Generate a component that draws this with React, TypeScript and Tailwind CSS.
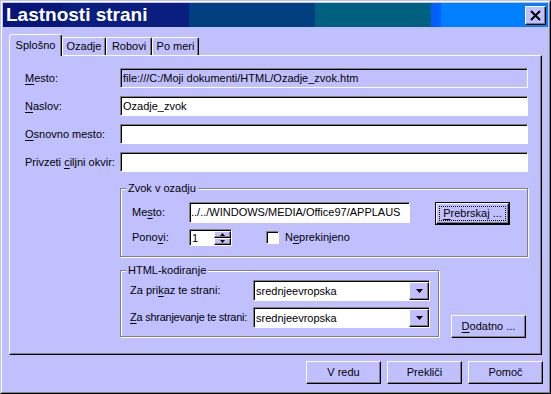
import React from "react";

const F = "font-['Liberation_Sans',Arial,sans-serif]";
const raised =
  "border border-t-white border-l-white border-r-black border-b-black shadow-[inset_-1px_-1px_0_#808080]";
const sunken =
  "border border-t-[#808080] border-l-[#808080] border-r-white border-b-white shadow-[inset_1px_1px_0_#000]";
const etched = "border border-[#808080] shadow-[1px_1px_0_#fff,inset_1px_1px_0_#fff]";

function U({ children }: { children: React.ReactNode }) {
  return <span className="underline underline-offset-[2px] decoration-1">{children}</span>;
}

function Btn({ children, className = "" }: { children: React.ReactNode; className?: string }) {
  return (
    <div className={`${raised} bg-[#c0c0ff] flex items-center justify-center h-[23px] w-[75px] ${className}`}>
      {children}
    </div>
  );
}

function Tab({ label, sel, w }: { label: React.ReactNode; sel?: boolean; w: string }) {
  if (sel)
    return (
      <div
        className={`relative z-10 mb-[-1px] h-[22px] ${w} bg-[#c0c0ff] border-l border-t border-r border-l-white border-t-white border-r-black rounded-tl-[3px] rounded-tr-[3px] shadow-[inset_-1px_0_0_#808080] flex items-center justify-center pb-[1px]`}
      >
        {label}
      </div>
    );
  return (
    <div
      className={`h-[18px] ${w} bg-[#c0c0ff] border-l border-t border-r border-l-white border-t-white border-r-black rounded-tl-[2px] rounded-tr-[2px] shadow-[inset_-1px_0_0_#808080] flex items-center justify-center`}
    >
      {label}
    </div>
  );
}

function Row({ label, value, ro }: { label: React.ReactNode; value?: string; ro?: boolean }) {
  return (
    <div className="flex items-center h-[20px]">
      <div className="w-[95px] whitespace-nowrap">{label}</div>
      <div
        className={`${sunken} flex-1 h-[20px] ${ro ? "bg-[#c0c0ff]" : "bg-white"} flex items-center pl-[2px] whitespace-nowrap overflow-hidden`}
      >
        {value}
      </div>
    </div>
  );
}

function Legend({ children }: { children: React.ReactNode }) {
  return (
    <span className="absolute top-[-7px] left-[5px] px-[2px] bg-[#c0c0ff] leading-[13px] whitespace-nowrap">
      {children}
    </span>
  );
}

function Select({ value }: { value: string }) {
  return (
    <div className={`${sunken} bg-white w-[177px] h-[21px] flex pt-[1px] pl-[1px]`}>
      <div className="flex-1 flex items-center pl-[1px] whitespace-nowrap overflow-hidden">{value}</div>
      <div className={`${raised} bg-[#c0c0ff] w-[20px] h-full flex items-center justify-center`}>
        <svg width="7" height="4" viewBox="0 0 7 4">
          <path d="M0 0H7L3.5 4Z" fill="#000" />
        </svg>
      </div>
    </div>
  );
}

export default function App() {
  return (
    <div
      className={`${F} text-[11px] leading-[13px] text-black w-[551px] h-[394px] bg-[#c0c0ff] border border-t-[#c0c0ff] border-l-[#c0c0ff] border-r-black border-b-black`}
    >
      <div className="w-full h-full border border-t-white border-l-white border-r-[#808080] border-b-[#808080] flex flex-col">
        {/* Title bar */}
        <div className="mt-[1px] mx-[1px] h-[24px] flex items-center bg-[linear-gradient(to_right,#08167a_59px,#0a1e80_59px,#0a1e80_186px,#004080_186px,#004080_312px,#00607f_312px,#00607f_428px,#0060ff_428px,#0060ff_438px,#0080ff_438px)]">
          <div className="flex-1 pl-[3px] font-bold text-[19px] leading-[24px] text-white">
            Lastnosti strani
          </div>
          <div className={`${raised} bg-[#c0c0ff] w-[21px] h-[19px] mr-[2px] mt-[1px] flex items-center justify-center`}>
            <svg width="11" height="11" viewBox="0 0 11 11">
              <path d="M1 1L10 10M10 1L1 10" stroke="#000" strokeWidth="2" />
            </svg>
          </div>
        </div>

        {/* Tabs */}
        <div className="mt-[7px] ml-[7px] h-[21px] flex items-end">
          <Tab sel w="w-[53px]" label="Splošno" />
          <Tab w="w-[44px]" label="Ozadje" />
          <Tab w="w-[46px]" label="Robovi" />
          <Tab w="w-[47px]" label="Po meri" />
        </div>

        {/* Panel */}
        <div className="ml-[7px] w-[533px] h-[300px] border border-t-white border-l-white border-r-black border-b-black shadow-[inset_-1px_-1px_0_#808080] pt-[12px] pl-[15px] pr-[13px] flex flex-col">
          <div className="flex flex-col gap-[8px]">
            <Row
              ro
              label={
                <>
                  <U>M</U>esto:
                </>
              }
              value="file:///C:/Moji dokumenti/HTML/Ozadje_zvok.htm"
            />
            <Row
              label={
                <>
                  <U>N</U>aslov:
                </>
              }
              value="Ozadje_zvok"
            />
            <Row
              label={
                <>
                  <U>O</U>snovno mesto:
                </>
              }
            />
            <Row
              label={
                <>
                  Privzeti <U>c</U>iljni okvir:
                </>
              }
            />
          </div>

          {/* Zvok v ozadju */}
          <div className={`relative mt-[16px] ml-[95px] h-[69px] ${etched} pt-[13px] pl-[11px]`}>
            <Legend>Zvok v ozadju</Legend>
            <div className="flex items-start">
              <div className="w-[57px] h-[21px] flex items-center">
                <span>
                  Me<U>s</U>to:
                </span>
              </div>
              <div className={`${sunken} bg-white w-[221px] h-[21px] flex items-center whitespace-nowrap overflow-hidden pl-[1px]`}>
                ../../WINDOWS/MEDIA/Office97/APPLAUS
              </div>
              <div className="ml-[25px] w-[75px] h-[23px] border border-black">
                <div className={`${raised} bg-[#c0c0ff] w-full h-full p-[2px] flex`}>
                  <div className="flex-1 border border-dotted border-black flex items-center justify-center">
                    <span>
                      <U>P</U>rebrskaj ...
                    </span>
                  </div>
                </div>
              </div>
            </div>
            <div className="flex items-center mt-[4px]">
              <div className="w-[57px]">
                Pono<U>v</U>i:
              </div>
              <div className={`${sunken} bg-white w-[43px] h-[17px] flex pt-[1px] pl-[1px]`}>
                <div className="flex-1 flex items-center pl-[1px]">1</div>
                <div className="w-[17px] flex flex-col">
                  <div className={`${raised} bg-[#c0c0ff] flex-1 flex items-center justify-center`}>
                    <svg width="5" height="3" viewBox="0 0 5 3">
                      <path d="M2.5 0L5 3H0Z" fill="#000" />
                    </svg>
                  </div>
                  <div className={`${raised} bg-[#c0c0ff] flex-1 flex items-center justify-center`}>
                    <svg width="5" height="3" viewBox="0 0 5 3">
                      <path d="M0 0H5L2.5 3Z" fill="#000" />
                    </svg>
                  </div>
                </div>
              </div>
              <div className={`${sunken} bg-white w-[13px] h-[13px] ml-[34px]`} />
              <div className="ml-[6px]">
                N<U>e</U>prekinjeno
              </div>
            </div>
          </div>

          {/* HTML-kodiranje */}
          <div className="mt-[13px] ml-[95px] flex items-end">
            <div className={`relative w-[319px] h-[67px] ${etched} pt-[9px] pl-[9px] flex flex-col gap-[6px]`}>
              <Legend>HTML-kodiranje</Legend>
              <div className="flex items-center">
                <div className="w-[123px] whitespace-nowrap">
                  Za pri<U>k</U>az te strani:
                </div>
                <Select value="srednjeevropska" />
              </div>
              <div className="flex items-center">
                <div className="w-[123px] whitespace-nowrap tracking-[-0.25px]">
                  <U>Z</U>a shranjevanje te strani:
                </div>
                <Select value="srednjeevropska" />
              </div>
            </div>
            <Btn className="ml-[12px] mb-[-1px]">
              <span>
                <U>D</U>odatno ...
              </span>
            </Btn>
          </div>
        </div>

        {/* Bottom buttons */}
        <div className="mt-[6px] pr-[6px] flex justify-end gap-[6px]">
          <Btn>V redu</Btn>
          <Btn>Prekliči</Btn>
          <Btn>Pomoč</Btn>
        </div>
      </div>
    </div>
  );
}
